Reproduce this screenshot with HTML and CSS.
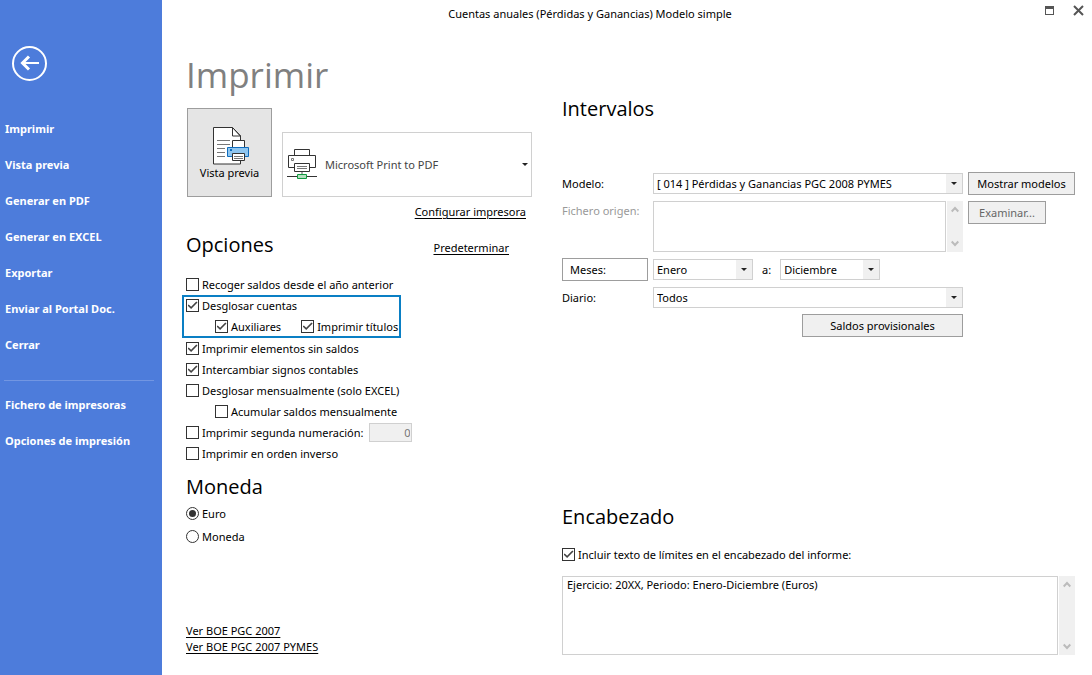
FILE: index.html
```html
<!DOCTYPE html>
<html lang="es">
<head>
<meta charset="utf-8">
<title>Cuentas anuales (Pérdidas y Ganancias) Modelo simple</title>
<link rel="stylesheet" href="styles.css">
</head>
<body>
<div class="window">
  <aside class="sidebar">
    <button class="back" type="button" aria-label="Volver">
      <svg width="36" height="36" viewBox="0 0 36 36" fill="none" stroke="#fff">
        <circle cx="17.500" cy="18.500" r="16.500" stroke-width="2"/>
        <path d="M27 18H11" stroke-width="2"/>
        <path d="M17 11.500L10.500 18l6.500 6.500" stroke-width="3"/>
      </svg>
    </button>
    <nav class="menu">
      <a href="#">Imprimir</a>
      <a href="#">Vista previa</a>
      <a href="#">Generar en PDF</a>
      <a href="#">Generar en EXCEL</a>
      <a href="#">Exportar</a>
      <a href="#">Enviar al Portal Doc.</a>
      <a href="#">Cerrar</a>
      <hr>
      <a href="#">Fichero de impresoras</a>
      <a href="#">Opciones de impresión</a>
    </nav>
  </aside>

  <main class="main">
    <header class="titlebar">
      <span class="caption">Cuentas anuales (Pérdidas y Ganancias) Modelo simple</span>
      <div class="controls">
        <button type="button" aria-label="Maximizar">
          <svg width="11" height="11" viewBox="0 0 11 11" shape-rendering="crispEdges"><path d="M1 1h9v9H1zM2 4v5h7V4z" fill="#555" fill-rule="evenodd"/></svg>
        </button>
        <button type="button" aria-label="Cerrar">
          <svg width="11" height="11" viewBox="0 0 11 11"><path d="M1 1l9 9M10 1l-9 9" stroke="#555" stroke-width="2"/></svg>
        </button>
      </div>
    </header>

    <div class="content">
      <section class="left">
        <h1>Imprimir</h1>
        <div class="print-row">
          <button class="preview" type="button">
            <svg width="38" height="38" viewBox="-1 0 38 38" fill="none">
              <path d="M1.500 .5h19l8 8.500v28h-27z" fill="#fff" stroke="#333"/>
              <path d="M20.500 .5v8.500h8M21 1l7.500 8" stroke="#333"/>
              <path d="M5 13.500h13M5 17.500h13M5 21.500h8M5 25.500h8M5 29.500h8" stroke="#777"/>
              <path d="M20.500 20.500v-7h12v7" fill="#fff" stroke="#333"/>
              <path d="M15.500 20.500h21v9h-21z" fill="#8fc6f0" stroke="#0f6cbd"/>
              <path d="M18 22h2v2h-2z" fill="#0f6cbd"/>
              <path d="M20.500 26.500h12v7h-12z" fill="#fff" stroke="#333"/>
              <path d="M22 29.500h9M22 31.500h9" stroke="#777"/>
            </svg>
            <span>Vista previa</span>
          </button>
          <div class="printer">
            <svg class="printer-icon" width="30" height="32" viewBox="0 0 30 32" fill="none">
              <path d="M7.500 7.500v-6h15v6" fill="#fff" stroke="#333"/>
              <path d="M1.500 7.500h27v12h-27z" fill="#fff" stroke="#333"/>
              <path d="M4.500 10.500h2v2h-2z" stroke="#777"/>
              <path d="M7.500 15.500h15v8h-15z" fill="#fff" stroke="#333"/>
              <path d="M10 18.500h10M10 20.500h10" stroke="#777"/>
              <path d="M14 24h2v2h-2z" fill="#aaa"/>
              <path d="M0 28.500h30" stroke="#333"/>
              <path d="M10.500 26.500h9v4h-9z" fill="#b5dfc0" stroke="#109a3f"/>
            </svg>
            <select aria-label="Impresora"><option>Microsoft Print to PDF</option></select>
          </div>
        </div>
        <a class="link configure" href="#">Configurar impresora</a>

        <div class="heading-row">
          <h2>Opciones</h2>
          <a class="link" href="#">Predeterminar</a>
        </div>
        <div class="options">
          <label class="check"><input type="checkbox">Recoger saldos desde el año anterior</label>
          <div class="highlight">
            <label class="check"><input type="checkbox" checked>Desglosar cuentas</label>
            <div class="pair">
              <label class="check"><input type="checkbox" checked>Auxiliares</label>
              <label class="check"><input type="checkbox" checked>Imprimir títulos</label>
            </div>
          </div>
          <label class="check"><input type="checkbox" checked>Imprimir elementos sin saldos</label>
          <label class="check"><input type="checkbox" checked>Intercambiar signos contables</label>
          <label class="check"><input type="checkbox">Desglosar mensualmente (solo EXCEL)</label>
          <label class="check nested"><input type="checkbox">Acumular saldos mensualmente</label>
          <div class="numbering">
            <label class="check"><input type="checkbox">Imprimir segunda numeración:</label>
            <input class="number" type="text" value="0" disabled aria-label="Segunda numeración">
          </div>
          <label class="check"><input type="checkbox">Imprimir en orden inverso</label>
        </div>

        <h2 class="currency-title">Moneda</h2>
        <div class="currency">
          <label class="check"><input type="radio" name="currency" checked>Euro</label>
          <label class="check"><input type="radio" name="currency">Moneda</label>
        </div>

        <div class="laws">
          <a class="link" href="#">Ver BOE PGC 2007</a>
          <a class="link" href="#">Ver BOE PGC 2007 PYMES</a>
        </div>
      </section>

      <section class="right">
        <h2>Intervalos</h2>
        <div class="form">
          <label for="model">Modelo:</label>
          <div class="select"><select id="model"><option>[ 014 ] Pérdidas y Ganancias PGC 2008 PYMES</option></select></div>
          <button class="btn" type="button">Mostrar modelos</button>

          <label class="off top" for="source">Fichero origen:</label>
          <div class="area">
            <textarea id="source" disabled></textarea>
            <div class="scroll">
              <svg width="8" height="7" viewBox="0 0 8 7"><path d="M.7 5.500L4 2l3.300 3.500" fill="none" stroke="#bbb" stroke-width="2"/></svg>
              <svg width="8" height="7" viewBox="0 0 8 7"><path d="M.7 1.500L4 5l3.300-3.500" fill="none" stroke="#bbb" stroke-width="2"/></svg>
            </div>
          </div>
          <button class="btn browse" type="button" disabled>Examinar...</button>

          <button class="btn months" type="button">Meses:</button>
          <div class="range">
            <div class="select month"><select aria-label="Mes inicial"><option>Enero</option></select></div>
            <label for="to">a:</label>
            <div class="select month"><select id="to"><option>Diciembre</option></select></div>
          </div>

          <label class="first" for="journal">Diario:</label>
          <div class="select"><select id="journal"><option>Todos</option></select></div>

          <button class="btn provisional" type="button">Saldos provisionales</button>
        </div>

        <div class="header-block">
          <h2>Encabezado</h2>
          <label class="check"><input type="checkbox" checked>Incluir texto de límites en el encabezado del informe:</label>
          <div class="area tall">
            <textarea aria-label="Texto del encabezado">Ejercicio: 20XX, Periodo: Enero-Diciembre (Euros)</textarea>
            <div class="scroll">
              <svg width="8" height="7" viewBox="0 0 8 7"><path d="M.7 5.500L4 2l3.300 3.500" fill="none" stroke="#bbb" stroke-width="2"/></svg>
              <svg width="8" height="7" viewBox="0 0 8 7"><path d="M.7 1.500L4 5l3.300-3.500" fill="none" stroke="#bbb" stroke-width="2"/></svg>
            </div>
          </div>
        </div>
      </section>
    </div>
  </main>
</div>
</body>
</html>
```
FILE: styles.css
```css
* { box-sizing: border-box; }

body {
  margin: 0;
  background: #fff;
  color: #000;
  font: 11px/16px "Noto Sans", "Open Sans", sans-serif;
}

button, input, select, textarea {
  margin: 0;
  color: inherit;
  font: inherit;
}

a { color: inherit; }

h1, h2 { margin: 0; font-family: "Open Sans", sans-serif; font-weight: 400; }
h1 { color: #808080; font-size: 35px; line-height: 46px; }
h2 { font-size: 20px; line-height: 26px; }

.window { display: flex; min-height: 100vh; }

/* Sidebar */
.sidebar {
  flex: 0 0 162px;
  padding-top: 45px;
  background: #4d7cdb;
  color: #fff;
}
.back {
  display: block;
  margin-left: 12px;
  padding: 0;
  border: 0;
  background: none;
}
.back svg { display: block; }
.menu { display: flex; flex-direction: column; padding-top: 30px; }
.menu a {
  padding-left: 5px;
  font-weight: 700;
  line-height: 36px;
  text-decoration: none;
}
.menu hr {
  width: 150px;
  margin: 17px 0 6px 4px;
  border: 0;
  border-top: 1px solid #7296e2;
}

/* Title bar */
.main { display: flex; flex: 1; flex-direction: column; min-width: 0; }
.titlebar { display: flex; height: 27px; }
.caption { flex: 1; line-height: 28px; text-align: center; }
.controls {
  display: flex;
  flex: 0 0 74px;
  gap: 18px;
  align-items: flex-start;
  justify-content: flex-end;
  padding: 5px 8px 0 0;
}
.controls button { padding: 0; border: 0; background: none; line-height: 0; }

/* Content */
.content {
  display: grid;
  flex: 1;
  grid-template-columns: 346px 1fr;
  gap: 30px;
  padding: 25px 17px 20px 24px;
}
.left, .right { display: flex; flex-direction: column; min-width: 0; }

.print-row { display: flex; align-items: flex-end; gap: 10px; margin: 10px 0 5px 1px; }
.preview {
  display: flex;
  flex-direction: column;
  align-items: center;
  justify-content: center;
  width: 85px;
  height: 89px;
  padding: 2px 0 0;
  border: 1px solid #9d9d9d;
  background: #e5e5e5;
}
.printer { position: relative; flex: 1; }
.printer select {
  display: block;
  width: 100%;
  height: 65px;
  padding: 0 20px 0 42px;
  border: 1px solid #d0d0d0;
  border-radius: 0;
  background: #fff;
  color: #444;
  appearance: none;
}
.printer-icon { position: absolute; top: 16px; left: 5px; pointer-events: none; }
.printer::after, .select::after {
  position: absolute;
  border: 3px solid transparent;
  border-top-color: #222;
  border-bottom: 0;
  content: "";
  pointer-events: none;
}
.printer::after { top: 31px; right: 4px; }

.link { text-decoration: underline; text-underline-offset: 2px; }
.configure { align-self: flex-end; margin-right: 6px; line-height: 20px; }
.heading-row {
  display: flex;
  align-items: center;
  justify-content: space-between;
  margin: 10px 0 16px;
  padding-right: 23px;
}
.heading-row .link { padding-top: 5px; }

.options { display: flex; flex-direction: column; align-items: flex-start; }
.check { display: flex; align-items: center; gap: 3px; height: 21px; white-space: nowrap; }
.check input {
  display: grid;
  flex: none;
  place-content: center;
  width: 13px;
  height: 13px;
  border: 1px solid #333;
  background: #fff;
  appearance: none;
}
.check input[type="checkbox"]:checked::before {
  width: 10px;
  height: 9px;
  background: #444;
  clip-path: polygon(0 50%, 12% 38%, 36% 64%, 88% 6%, 100% 18%, 36% 90%);
  content: "";
}
.check input[type="radio"] { border-radius: 50%; }
.check input[type="radio"]:checked::before {
  width: 7px;
  height: 7px;
  border-radius: 50%;
  background: #333;
  content: "";
}
.highlight {
  margin-left: -4px;
  padding: 0 3px 1px 4px;
  box-shadow: inset 0 0 0 2px #0a7fc4;
}
.pair { display: flex; gap: 20px; padding-left: 29px; }
.nested { padding-left: 29px; }
.numbering { display: flex; align-items: center; gap: 6px; height: 21px; }
.number {
  width: 43px;
  height: 19px;
  padding: 0 1px;
  border: 1px solid #d0d0d0;
  background: #f0f0f0;
  color: #777;
  text-align: right;
}

.currency-title { margin: 10px 0 2px; }
.currency .check { height: 23px; }
.laws { display: flex; flex-direction: column; align-items: flex-start; margin-top: auto; }

/* Interval form */
.right { padding-top: 44px; }
.form {
  display: grid;
  grid-template-columns: 86px 1fr 107px;
  gap: 6px 5px;
  align-items: center;
  margin-top: 50px;
}
.form .off { color: #999; }
.form .top { align-self: start; padding-top: 2px; }
.form .first { grid-column: 1; }

.btn {
  height: 23px;
  padding: 0 7px;
  border: 1px solid #9d9d9d;
  background: #f0f0f0;
  white-space: nowrap;
}
.btn:disabled { color: #666; }
.browse { align-self: start; justify-self: start; width: 78px; }
.months { background: #fff; text-align: left; }
.provisional { grid-column: 2; justify-self: end; width: 161px; }

.select { position: relative; min-width: 0; }
.select select {
  display: block;
  width: 100%;
  height: 21px;
  padding: 0 18px 0 3px;
  border: 1px solid #d0d0d0;
  border-radius: 0;
  background: linear-gradient(#f0f0f0, #f0f0f0) right / 16px 100% no-repeat #fff;
  appearance: none;
}
.select::after { top: 9px; right: 6px; }
.month { width: 100px; }
.range { display: flex; align-items: center; gap: 9px; }

.area { display: flex; gap: 1px; height: 51px; }
.area textarea {
  flex: 1;
  min-width: 0;
  padding: 0 4px;
  border: 1px solid #d0d0d0;
  background: #fff;
  resize: none;
}
.tall { height: 79px; margin-top: 11px; }
.scroll {
  display: flex;
  flex: 0 0 16px;
  flex-direction: column;
  align-items: center;
  justify-content: space-between;
  padding: 5px 0;
  background: #f0f0f0;
}

.header-block { margin-top: auto; }
.header-block .check { margin-top: 14px; }
```
